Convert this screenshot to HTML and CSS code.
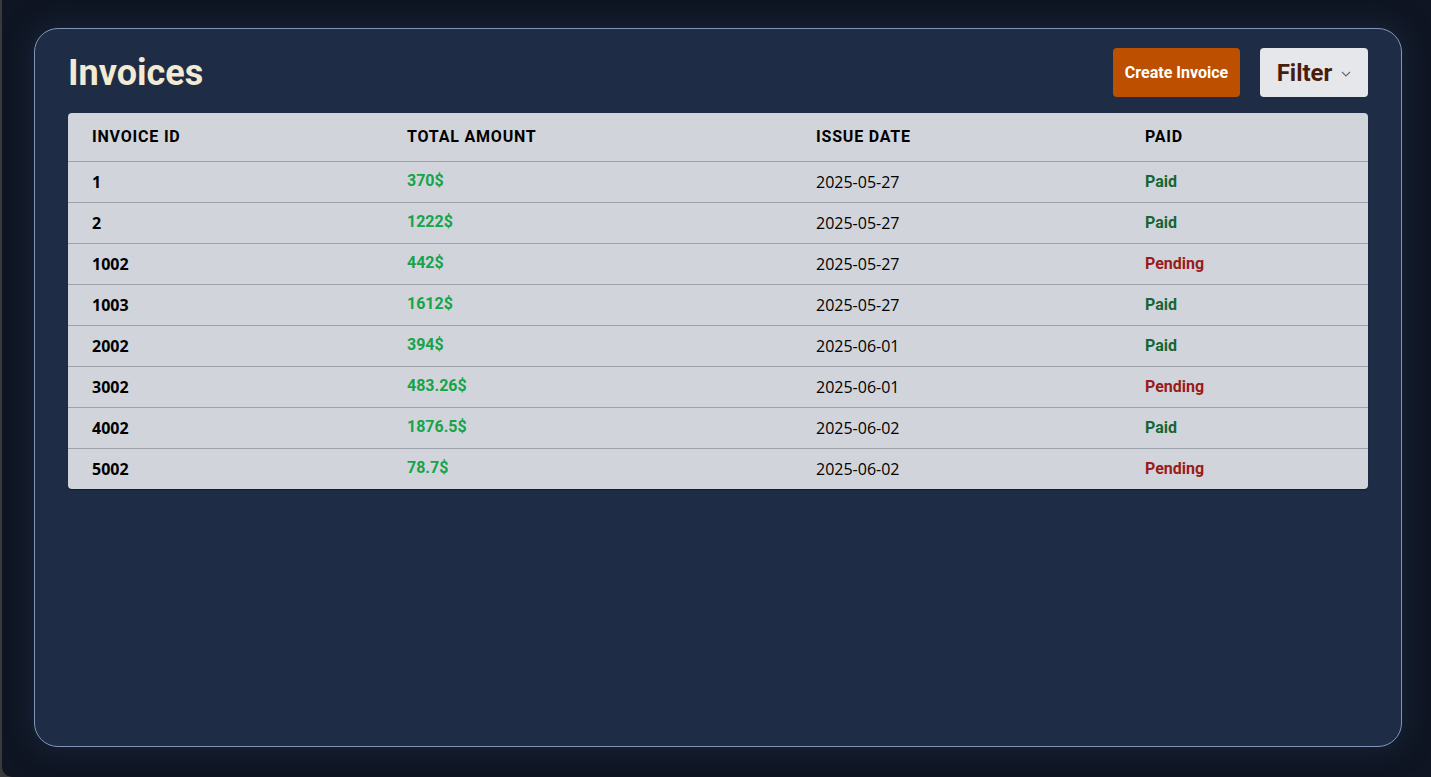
FILE: index.html
```html
<!DOCTYPE html>
<html lang="en">
<head>
<meta charset="utf-8">
<title>Invoices</title>
<link rel="stylesheet" href="styles.css">
</head>
<body>
<div class="screen">
  <main class="card">
    <header class="topbar">
      <h1 class="title">Invoices</h1>
      <div class="actions">
        <button class="btn-create">Create Invoice</button>
        <button class="btn-filter">Filter <svg class="chev" width="10" height="6" viewBox="0 0 10 6"><path d="M1 1l4 4 4-4" fill="none" stroke="#6b6b6b" stroke-width="1.2"/></svg></button>
      </div>
    </header>
    <table class="invoices">
      <thead>
        <tr><th>Invoice ID</th><th>Total Amount</th><th>Issue Date</th><th>Paid</th></tr>
      </thead>
      <tbody>
        <tr><td class="id">1</td><td class="amt">370$</td><td class="date">2025-05-27</td><td class="paid">Paid</td></tr>
        <tr><td class="id">2</td><td class="amt">1222$</td><td class="date">2025-05-27</td><td class="paid">Paid</td></tr>
        <tr><td class="id">1002</td><td class="amt">442$</td><td class="date">2025-05-27</td><td class="pending">Pending</td></tr>
        <tr><td class="id">1003</td><td class="amt">1612$</td><td class="date">2025-05-27</td><td class="paid">Paid</td></tr>
        <tr><td class="id">2002</td><td class="amt">394$</td><td class="date">2025-06-01</td><td class="paid">Paid</td></tr>
        <tr><td class="id">3002</td><td class="amt">483.26$</td><td class="date">2025-06-01</td><td class="pending">Pending</td></tr>
        <tr><td class="id">4002</td><td class="amt">1876.5$</td><td class="date">2025-06-02</td><td class="paid">Paid</td></tr>
        <tr><td class="id">5002</td><td class="amt">78.7$</td><td class="date">2025-06-02</td><td class="pending">Pending</td></tr>
      </tbody>
    </table>
  </main>
</div>
</body>
</html>
```
FILE: styles.css
```css
html, body {
  margin: 0;
  padding: 0;
  height: 100%;
}
body {
  background: #3a3a3a;
  font-family: "Open Sans", sans-serif;
}
.screen {
  margin-left: 2px;
  height: 777px;
  box-sizing: border-box;
  background: #0f1522;
  border-bottom-left-radius: 10px;
  padding: 28px 29px 0 32px;
  overflow: hidden;
}
.card {
  box-sizing: border-box;
  height: 719px;
  background: #1e2d45;
  border: 1.5px solid #8196b6;
  border-radius: 24px;
  padding: 19px 33px 0 33px;
  box-shadow: 0 0 24px 6px rgba(30, 45, 69, 0.55);
}
.topbar {
  display: flex;
  align-items: center;
  justify-content: space-between;
  height: 49px;
  margin-bottom: 16px;
}
.title {
  margin: 0;
  font-family: Roboto, sans-serif;
  font-weight: 700;
  font-size: 36px;
  color: #f3ead3;
  letter-spacing: 0;
}
.actions {
  display: flex;
  gap: 20px;
  height: 49px;
}
.btn-create {
  width: 127px;
  height: 49px;
  border: none;
  border-radius: 4px;
  background: #bd4f00;
  color: #ffffff;
  font-family: Roboto, sans-serif;
  font-weight: 700;
  font-size: 16px;
  padding: 0;
}
.btn-filter {
  width: 108px;
  height: 49px;
  border: none;
  border-radius: 4px;
  background: #e5e7eb;
  color: #4a1c0b;
  font-family: Roboto, sans-serif;
  font-weight: 700;
  font-size: 24px;
  padding: 0;
  display: flex;
  align-items: center;
  justify-content: center;
  gap: 9px;
}
.chev {
  margin-top: 2px;
}
.invoices {
  width: 100%;
  border-collapse: collapse;
  background: #d1d5db;
  border-radius: 4px;
  overflow: hidden;
  box-shadow: 0 1px 1px rgba(0, 0, 0, 0.35);
}
.invoices th {
  text-align: left;
  font-family: Roboto, sans-serif;
  font-weight: 700;
  font-size: 16px;
  letter-spacing: 0.05em;
  text-transform: uppercase;
  color: #000;
  height: 48px;
  padding: 0 24px;
  border-bottom: 1px solid #9ca3af;
  box-sizing: border-box;
}
.invoices th:nth-child(1) { width: 315px; }
.invoices th:nth-child(2) { width: 409px; }
.invoices th:nth-child(3) { width: 329px; }
.invoices td {
  height: 41px;
  padding: 0 24px;
  box-sizing: border-box;
  font-size: 16px;
  color: #000;
}
.invoices tbody tr + tr td {
  border-top: 1px solid #9ca3af;
}
.invoices td.id {
  font-weight: 700;
  padding-top: 1px;
}
.invoices td.amt {
  font-family: Roboto, sans-serif;
  font-weight: 700;
  color: #16a34a;
  padding-bottom: 2px;
}
.invoices td.date {
  padding-top: 1px;
}
.invoices td.paid {
  font-family: Roboto, sans-serif;
  font-weight: 700;
  color: #166534;
  padding-bottom: 1px;
}
.invoices td.pending {
  font-family: Roboto, sans-serif;
  font-weight: 700;
  color: #991b1b;
  padding-bottom: 1px;
}
```
